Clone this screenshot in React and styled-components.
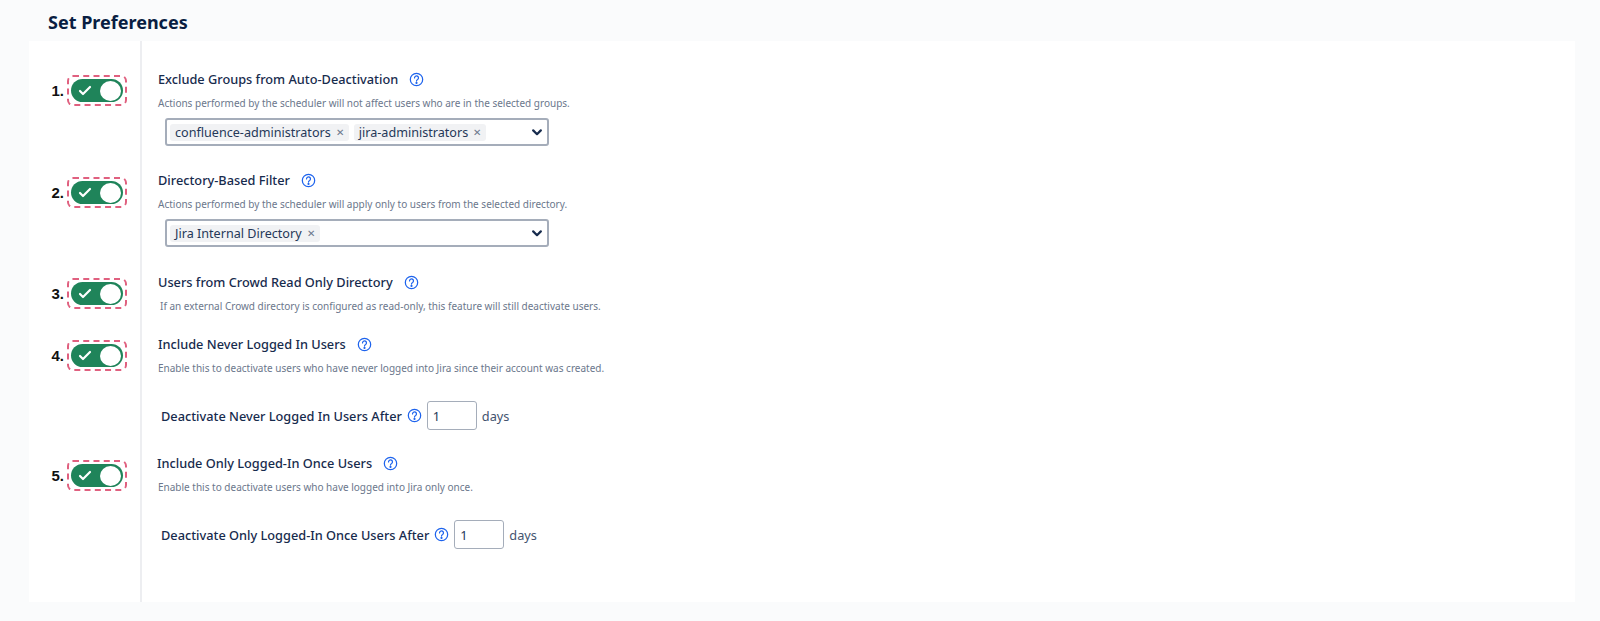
import React from 'react';
import styled, { createGlobalStyle } from 'styled-components';

const GlobalStyle = createGlobalStyle`
    html, body {
        margin: 0;
        background: #fafbfc;
    }
    body {
        font-family: "Noto Sans", "Open Sans", sans-serif;
        color: #172b4d;
    }
`;

const Page = styled.div`
    height: 621px;
    box-sizing: border-box;
    padding: 0 25px 19px 29px;
    display: flex;
    flex-direction: column;
    overflow: hidden;
`;

const Title = styled.h2`
    height: 41px;
    margin: 0;
    padding: 9px 0 0 19px;
    box-sizing: border-box;
    font-size: 18px;
    line-height: 26px;
    font-weight: 700;
    color: #091e42;
`;

const Panel = styled.div`
    flex: 1;
    display: flex;
    background: #fff;
`;

const Side = styled.div`
    width: 113px;
    flex: none;
    box-sizing: border-box;
    border-right: 2px solid #edeef1;
    display: flex;
    flex-direction: column;
`;

const ToggleRow = styled.div`
    display: flex;
    align-items: center;
    justify-content: flex-end;
    gap: 3px;
    height: 31px;
    padding-right: 13px;
    margin-top: ${(p) => p.$top}px;
`;

const Num = styled.span`
    font-family: "Liberation Sans", Arial, sans-serif;
    font-size: 15px;
    font-weight: 700;
    color: #111;
`;

const Dashed = styled.div`
    width: 60px;
    height: 31px;
    box-sizing: border-box;
    border: 2px dashed #e0607f;
    border-radius: 6px;
    display: flex;
    align-items: center;
    justify-content: center;
`;

const Pill = styled.div`
    width: 52px;
    height: 23px;
    flex: none;
    box-sizing: border-box;
    border-radius: 12px;
    background: #1f845a;
    padding: 2px 2px 2px 7px;
    display: flex;
    align-items: center;
    justify-content: space-between;
`;

const Knob = styled.div`
    width: 21px;
    height: 20px;
    border-radius: 50%;
    background: #fff;
`;

const Main = styled.div`
    flex: 1;
    display: flex;
    flex-direction: column;
    padding-left: 16px;
`;

const Heading = styled.div`
    display: flex;
    align-items: center;
    gap: 11px;
    height: 20px;
    margin-top: ${(p) => p.$top}px;
    margin-left: ${(p) => p.$left || 0}px;
    font-size: 12.75px;
    font-weight: 500;
    color: #172b4d;
`;

const Desc = styled.div`
    height: 16px;
    line-height: 16px;
    margin-top: 6px;
    margin-left: ${(p) => p.$left || 0}px;
    font-size: 10px;
    color: #6b778c;
`;

const SelectBox = styled.div`
    width: 384px;
    height: 28px;
    box-sizing: border-box;
    margin: 7px 0 0 7px;
    padding: 0 5px 0 3px;
    background: #fff;
    border: 2px solid #a5adba;
    border-radius: 3px;
    display: flex;
    align-items: center;
    gap: 5px;
`;

const Tag = styled.span`
    display: inline-flex;
    align-items: center;
    gap: 5px;
    height: 17px;
    padding: 0 5px;
    border-radius: 3px;
    background: #f1f2f4;
    font-size: 12.6px;
    color: #253858;
`;

const TagX = styled.span`
    font-size: 10px;
    line-height: 1;
    color: #6b778c;
`;

const Chevron = styled.svg`
    margin-left: auto;
    width: 10px;
    height: 7px;
`;

const AfterRow = styled.div`
    display: flex;
    align-items: center;
    height: 29px;
    margin-top: ${(p) => p.$top}px;
    margin-left: 3px;
    font-size: 12.75px;
    font-weight: 500;
`;

const HelpWrap = styled.svg`
    width: 15px;
    height: 15px;
    flex: none;
    margin-left: ${(p) => p.$gap || 0}px;
`;

const NumInput = styled.div`
    width: 50px;
    height: 29px;
    box-sizing: border-box;
    margin-left: 5px;
    padding-left: 5px;
    border: 1px solid #a5adba;
    border-radius: 3px;
    display: flex;
    align-items: center;
    font-weight: 400;
    color: #253858;
`;

const Days = styled.span`
    margin-left: 5px;
    font-weight: 400;
    color: #44546f;
`;

const Help = ({ gap }) => (
    <HelpWrap viewBox="0 0 16 16" $gap={gap} fill="none" stroke="#1d63ed" strokeWidth="1.3">
        <circle cx="8" cy="8" r="6.6" />
        <path d="M5.9 6.3a2.1 2.1 0 1 1 3.3 1.7c-.8.5-1.2.9-1.2 1.7" strokeLinecap="round" />
        <circle cx="8" cy="11.6" r=".5" fill="#1d63ed" />
    </HelpWrap>
);

const Toggle = ({ n, top }) => (
    <ToggleRow $top={top}>
        <Num>{n}.</Num>
        <Dashed>
            <Pill>
                <svg width="14" height="11" viewBox="0 0 14 11" fill="none" stroke="#fff" strokeWidth="2.2" strokeLinecap="round" strokeLinejoin="round">
                    <path d="M2 6l3 3 7-7" />
                </svg>
                <Knob />
            </Pill>
        </Dashed>
    </ToggleRow>
);

const Select = ({ tags }) => (
    <SelectBox>
        {tags.map((t) => (
            <Tag key={t}>{t}<TagX>✕</TagX></Tag>
        ))}
        <Chevron viewBox="0 0 10 7" fill="none" stroke="#172b4d" strokeWidth="2.2" strokeLinecap="round" strokeLinejoin="round">
            <path d="M1.2 1.4l3.8 3.8 3.8-3.8" />
        </Chevron>
    </SelectBox>
);

const App = () => (
    <Page>
        <GlobalStyle />
        <Title>Set Preferences</Title>
        <Panel>
            <Side>
                <Toggle n={1} top={34} />
                <Toggle n={2} top={71} />
                <Toggle n={3} top={70} />
                <Toggle n={4} top={31} />
                <Toggle n={5} top={89} />
            </Side>
            <Main>
                <Heading $top={28}>Exclude Groups from Auto-Deactivation<Help /></Heading>
                <Desc>Actions performed by the scheduler will not affect users who are in the selected groups.</Desc>
                <Select tags={['confluence-administrators', 'jira-administrators']} />
                <Heading $top={24}>Directory-Based Filter<Help /></Heading>
                <Desc>Actions performed by the scheduler will apply only to users from the selected directory.</Desc>
                <Select tags={['Jira Internal Directory']} />
                <Heading $top={25}>Users from Crowd Read Only Directory<Help /></Heading>
                <Desc $left={2}>If an external Crowd directory is configured as read-only, this feature will still deactivate users.</Desc>
                <Heading $top={20}>Include Never Logged In Users<Help /></Heading>
                <Desc>Enable this to deactivate users who have never logged into Jira since their account was created.</Desc>
                <AfterRow $top={25}>Deactivate Never Logged In Users After<Help gap={5} /><NumInput>1</NumInput><Days>days</Days></AfterRow>
                <Heading $top={23} $left={-1}>Include Only Logged-In Once Users<Help /></Heading>
                <Desc>Enable this to deactivate users who have logged into Jira only once.</Desc>
                <AfterRow $top={25}>Deactivate Only Logged-In Once Users After<Help gap={5} /><NumInput>1</NumInput><Days>days</Days></AfterRow>
            </Main>
        </Panel>
    </Page>
);

export default App;
